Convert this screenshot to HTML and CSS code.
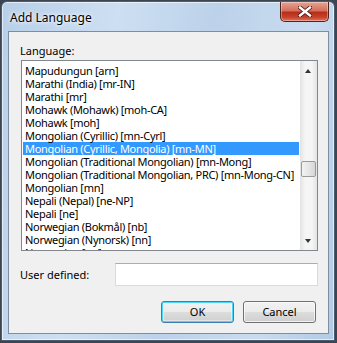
FILE: index.html
```html
<!DOCTYPE html>
<html lang="en">
<head>
    <meta charset="UTF-8">
    <title>Add Language</title>
    <link rel="stylesheet" href="styles.css">
</head>
<body>
    <div class="window">
        <div class="title_bar">
            <span class="title">Add Language</span>
            <div class="close_btn">
                <svg width="14" height="11" viewBox="0 0 14 11">
                    <path d="M2 1.5 L12 9.5 M12 1.5 L2 9.5" stroke="#4a1410" stroke-width="4" stroke-linecap="square"/>
                    <path d="M2 1.5 L12 9.5 M12 1.5 L2 9.5" stroke="#fff" stroke-width="2.4" stroke-linecap="square"/>
                </svg>
            </div>
        </div>
        <div class="client">
            <p class="label lang_label">Language:</p>
            <div class="listbox">
                <ul class="items">
                    <li>Mapudungun [arn]</li>
                    <li>Marathi (India) [mr-IN]</li>
                    <li>Marathi [mr]</li>
                    <li>Mohawk (Mohawk) [moh-CA]</li>
                    <li>Mohawk [moh]</li>
                    <li>Mongolian (Cyrillic) [mn-Cyrl]</li>
                    <li class="selected">Mongolian (Cyrillic, Mongolia) [mn-MN]</li>
                    <li>Mongolian (Traditional Mongolian) [mn-Mong]</li>
                    <li>Mongolian (Traditional Mongolian, PRC) [mn-Mong-CN]</li>
                    <li>Mongolian [mn]</li>
                    <li>Nepali (Nepal) [ne-NP]</li>
                    <li>Nepali [ne]</li>
                    <li>Norwegian (Bokmål) [nb]</li>
                    <li>Norwegian (Nynorsk) [nn]</li>
                    <li>Norwegian [no]</li>
                </ul>
                <div class="scrollbar">
                    <div class="arrow up"></div>
                    <div class="track">
                        <div class="thumb"></div>
                    </div>
                    <div class="arrow down"></div>
                </div>
            </div>
            <div class="user_row">
                <span class="label">User defined:</span>
                <div class="textbox"></div>
            </div>
            <div class="buttons">
                <div class="btn btn_default">OK</div>
                <div class="btn">Cancel</div>
            </div>
        </div>
    </div>
</body>
</html>
```

FILE: styles.css
```css
html, body{
    margin: 0;
    padding: 0;
}
body{
    width: 337px;
    height: 343px;
    overflow: hidden;
    background-color: #3b4652;
    font-family: "Noto Sans", "DejaVu Sans", sans-serif;
    font-size: 11px;
    color: #000;
}
.window{
    width: 332px;
    height: 338px;
    margin: 1px 0 0 1px;
    border: 1px solid #4e5c6b;
    border-radius: 6px 6px 0 0;
    background: linear-gradient(100deg, #b7cfe9 0%, #cddff2 30%, #bcd2ea 55%, #c9dbef 80%, #b2cbe6 100%);
    box-shadow: inset 0 0 0 1px rgba(255,255,255,0.6);
}
.title_bar{
    height: 29px;
    display: flex;
    justify-content: space-between;
    align-items: flex-start;
}
.title{
    margin: 8px 0 0 8px;
    font-size: 12px;
    line-height: 16px;
    text-shadow: 0 0 6px #fff, 0 0 3px #fff;
}
.close_btn{
    width: 47px;
    height: 19px;
    margin-right: 5px;
    border: 1px solid #4d2420;
    border-top: none;
    border-radius: 0 0 5px 5px;
    background: linear-gradient(#e8a394 0%, #d4705d 45%, #b82e18 55%, #c8412a 80%, #e07660 100%);
    box-shadow: inset 0 0 0 1px rgba(255,255,255,0.35);
    display: flex;
    justify-content: center;
    align-items: center;
}
.client{
    margin: 0 5px 0 6px;
    height: 301px;
    border: 1px solid #7d8ea1;
    background-color: #f0f0f0;
    display: flex;
    flex-direction: column;
}
.label{
    margin: 0;
    line-height: 15px;
}
.lang_label{
    margin: 11px 0 0 11px;
}
.listbox{
    margin: 2px 10px 0 12px;
    height: 189px;
    border: 1px solid #828790;
    background-color: #fff;
    display: flex;
    overflow: hidden;
}
/* 列表文字稍微收紧，接近原来的宽度 */
.items{
    flex: 1;
    min-width: 0;
    overflow: hidden;
    list-style: none;
    margin: 0;
    padding: 3px 1px 0 1px;
    letter-spacing: -0.3px;
}
.items li{
    height: 13px;
    line-height: 13px;
    padding-left: 2px;
    white-space: nowrap;
}
.items li.selected{
    background-color: #3399ff;
    color: #fff;
}
.scrollbar{
    flex: 0 0 17px;
    display: flex;
    flex-direction: column;
    background: linear-gradient(90deg, #e3e3e3, #f5f5f5 30%, #f5f5f5 70%, #e3e3e3);
}
.arrow{
    height: 17px;
    position: relative;
}
.arrow::after{
    content: "";
    position: absolute;
    left: 5px;
    width: 0;
    height: 0;
    border-left: 3.5px solid transparent;
    border-right: 3.5px solid transparent;
}
.up::after{
    top: 8px;
    border-bottom: 4px solid #333;
}
.down::after{
    top: 6px;
    border-top: 4px solid #333;
}
.track{
    flex: 1;
    padding-top: 83px;
}
.thumb{
    width: 13px;
    height: 14px;
    margin-left: 1px;
    border: 1px solid #9a9a9a;
    border-radius: 2px;
    background: linear-gradient(90deg, #f3f3f3, #e6e6e6 50%, #d6d6d6);
}
.user_row{
    margin: 12px 10px 0 11px;
    display: flex;
    justify-content: space-between;
    align-items: center;
}
.textbox{
    width: 201px;
    height: 21px;
    border: 1px solid #d6dbe2;
    border-top-color: #abadb3;
    background-color: #fff;
}
.buttons{
    margin: 15px 12px 0 0;
    display: flex;
    justify-content: flex-end;
    gap: 9px;
}
.btn{
    width: 71px;
    height: 20px;
    line-height: 20px;
    text-align: center;
    border: 1px solid #707070;
    border-radius: 3px;
    background: linear-gradient(#f2f2f2 0%, #ebebeb 50%, #dddddd 51%, #cfcfcf 100%);
    box-shadow: inset 0 0 0 1px rgba(255,255,255,0.7);
}
.btn_default{
    border-color: #3c7fb1;
    box-shadow: inset 0 0 0 1px #48d8fb, inset 0 0 0 2px rgba(255,255,255,0.4);
}
```
